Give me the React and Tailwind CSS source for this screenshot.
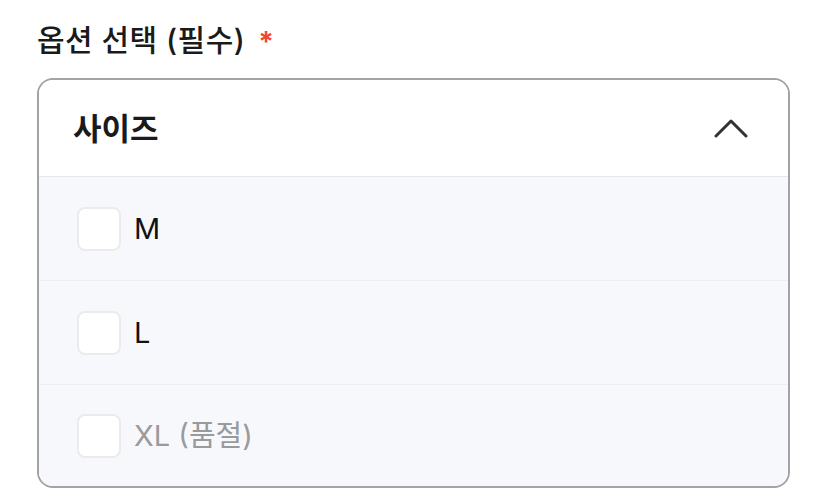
import { useState } from "react"

const options = [
  { id: "M", label: "M", disabled: false },
  { id: "L", label: "L", disabled: false },
  { id: "XL", label: "XL (품절)", disabled: true },
]

export default function App() {
  const [open, setOpen] = useState(true)
  const [checked, setChecked] = useState({})

  return (
    <div
      className="w-[828px] h-[504px] bg-white px-[37px] pt-[18px]"
      style={{ fontFamily: 'Inter, "Noto Sans CJK KR", "Noto Sans", sans-serif' }}
    >
      <div className="flex items-center h-[44px] gap-[13px]">
        <span className="text-[30px] font-medium text-[#1a1a1a] leading-none tracking-[0.015em]">옵션 선택 (필수)</span>
        <span className="text-[28px] font-bold text-[#f0482f] leading-none mt-[4px]">*</span>
      </div>

      <div className="mt-[16px] w-[753px] border-2 border-[#a3a3a3] rounded-[16px] overflow-hidden">
        <button
          onClick={() => setOpen(!open)}
          className="w-full h-[97px] bg-white flex items-center justify-between pl-[34px] pr-[40px] border-b border-[#e6e8ec]"
        >
          <span className="text-[31px] font-bold text-[#1a1a1a] leading-none">사이즈</span>
          <svg width="34" height="20" viewBox="0 0 34 20" fill="none" className={open ? "" : "rotate-180"}>
            <path d="M2 18 L17 3 L32 18" stroke="#333" strokeWidth="3" strokeLinecap="round" strokeLinejoin="round" />
          </svg>
        </button>

        {open && (
          <div className="bg-[#f7f8fc]">
            {options.map((o, i) => (
              <label
                key={o.id}
                className={`flex items-center pl-[38px] gap-[13px] ${
                  i < options.length - 1 ? "h-[104px] border-b border-[#eceef2]" : "h-[101px]"
                }`}
              >
                <span
                  onClick={() => !o.disabled && setChecked({ ...checked, [o.id]: !checked[o.id] })}
                  className="w-[44px] h-[44px] rounded-[8px] border-2 border-[#ebebeb] bg-white"
                ></span>
                <span className={`text-[29px] font-normal leading-none ${o.disabled ? "text-[#9a9a9a]" : "text-[#111]"}`}>
                  {o.label}
                </span>
              </label>
            ))}
          </div>
        )}
      </div>
    </div>
  )
}
